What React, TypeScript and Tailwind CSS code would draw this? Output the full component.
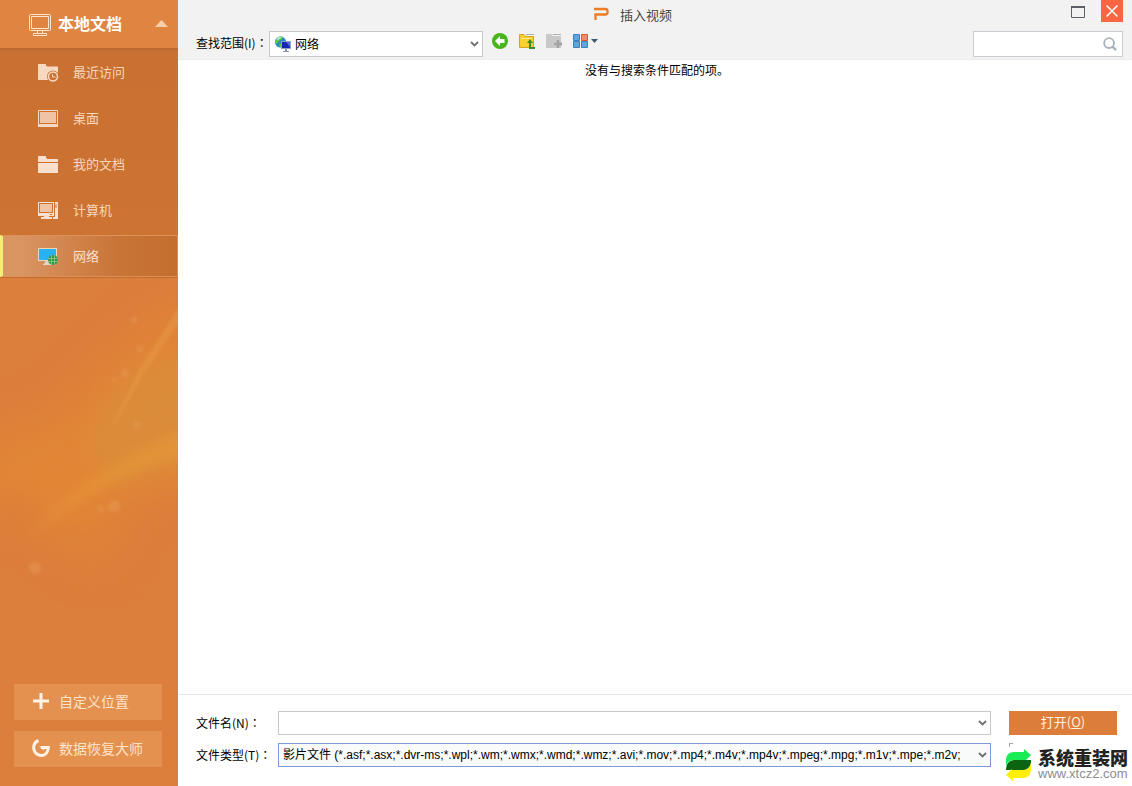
import React, { useState } from 'react';

const RecentIcon = () => (
  <svg width="22" height="22" viewBox="0 -2 22 22" aria-hidden="true">
    <path d="M0 1h8v2h12v14H0z" fill="#f7d9c2" />
    <path d="M9 3h11" stroke="#cb7132" />
    <circle cx="15" cy="13.500" r="6" fill="#cb7132" />
    <circle cx="15" cy="13.500" r="4.500" fill="none" stroke="#f7d9c2" strokeWidth="1.500" />
    <path d="M14.500 11v3h3" fill="none" stroke="#f7d9c2" />
  </svg>
);

const DesktopIcon = () => (
  <svg width="22" height="22" viewBox="0 -2 22 22" aria-hidden="true">
    <path d="M.500 1.500h19v16H.500z" fill="none" stroke="#f7d9c2" />
    <path d="M2 3h16v11H2z" fill="#efc3a3" />
    <path d="M0 15h20v3H0z" fill="#f7d9c2" />
  </svg>
);

const FolderIcon = () => (
  <svg width="22" height="22" viewBox="0 -2 22 22" aria-hidden="true">
    <path d="M0 1h8v2h12v4H0zM0 8h20v10H0z" fill="#f9dfcc" />
    <path d="M9 3.500h11" stroke="#cb7132" />
  </svg>
);

const ComputerIcon = () => (
  <svg width="22" height="22" viewBox="0 -2 22 22" aria-hidden="true">
    <path d="M.500 1.500h15v11H.500z" fill="none" stroke="#f9dfcc" />
    <path d="M2 3h12v8H2z" fill="#efc3a3" />
    <path d="M0 12h16v3H0zM17 1h3v16h-3zM6 15h5v1H6zM3 16h11v2H3zM15 16h5v2h-5z" fill="#f9dfcc" />
    <path d="M17 4h2M17 6h2M12 13.500h2" stroke="#cb7132" />
  </svg>
);

const NetworkIcon = () => (
  <svg width="22" height="22" viewBox="0 -2 22 22" aria-hidden="true">
    <path d="M0 1h19v13H0z" fill="#f1d5bb" />
    <path d="M1 2h17v11H1z" fill="#29b1f6" />
    <path d="M7 14h5v2h2v2H5v-1l2-1z" fill="#ded5cb" />
    <circle cx="15" cy="13" r="5" fill="#33964a" />
    <path d="M10 11.500h10M10 14.500h10M13.500 8v10M16.500 8v10" stroke="#9ad08d" strokeWidth=".7" />
  </svg>
);

const places = [
  { name: '最近访问', Icon: RecentIcon },
  { name: '桌面', Icon: DesktopIcon },
  { name: '我的文档', Icon: FolderIcon },
  { name: '计算机', Icon: ComputerIcon },
  { name: '网络', Icon: NetworkIcon },
];

const videoTypes =
  '影片文件 (*.asf;*.asx;*.dvr-ms;*.wpl;*.wm;*.wmx;*.wmd;*.wmz;*.avi;*.mov;*.mp4;*.m4v;*.mp4v;*.mpeg;*.mpg;*.m1v;*.mpe;*.m2v;';

const Colon = () => <span className="font-['Noto_Sans_CJK_TC',sans-serif]">：</span>;

const Chevron = () => (
  <svg
    className="pointer-events-none absolute top-1/2 right-1 -translate-y-1/2"
    width="9"
    height="7"
    viewBox="0 0 9 7"
    aria-hidden="true"
  >
    <path d="M1 1.500l3.500 3.500L8 1.500" fill="none" stroke="#6d6f73" strokeWidth="1.800" />
  </svg>
);

const SidebarArt = () => (
  <svg
    className="absolute inset-x-0 top-[278px] h-[330px] w-full"
    viewBox="0 0 178 330"
    preserveAspectRatio="none"
    aria-hidden="true"
  >
    <defs>
      <filter id="soft" x="-50%" y="-50%" width="200%" height="200%">
        <feGaussianBlur stdDeviation="26" />
      </filter>
      <filter id="mid" x="-50%" y="-50%" width="200%" height="200%">
        <feGaussianBlur stdDeviation="14" />
      </filter>
      <filter id="ray" x="-50%" y="-50%" width="200%" height="200%">
        <feGaussianBlur stdDeviation="6" />
      </filter>
      <filter id="thin" x="-50%" y="-50%" width="200%" height="200%">
        <feGaussianBlur stdDeviation="1.500" />
      </filter>
    </defs>
    <path d="M-30 170L60 140L150 50L230 20V200L120 210L100 290L50 240L-30 225z" fill="#e58b33" opacity=".65" filter="url(#soft)" />
    <path d="M95 130L150 80L230 80V170L120 210L90 180z" fill="#d3943f" opacity=".4" filter="url(#mid)" />
    <path d="M25 262Q80 195 210 140V172Q100 195 25 262z" fill="#e89a38" opacity=".6" filter="url(#ray)" />
    <path d="M112 147L140 90L185 20V36L145 94L115 147z" fill="#e89a45" opacity=".5" filter="url(#thin)" />
    <ellipse cx="14" cy="236" rx="14" ry="16" fill="#da7b3c" opacity=".7" filter="url(#mid)" />
    <g fill="#eba262" opacity=".35" filter="url(#thin)">
      <circle cx="114" cy="228" r="6" />
      <circle cx="101" cy="231" r="3" />
      <circle cx="35" cy="290" r="6" />
      <circle cx="137" cy="147" r="4" />
      <circle cx="125" cy="95" r="4" />
      <circle cx="134" cy="42" r="3" />
      <circle cx="140" cy="71" r="3" />
      <circle cx="114" cy="102" r="2" />
    </g>
  </svg>
);

const Sidebar = () => {
  const [active, setActive] = useState('网络');

  return (
    <aside className="relative flex w-[178px] shrink-0 flex-col bg-[#dc7e3c]">
      <SidebarArt />
      <button className="relative flex h-12 items-center bg-[#df8441] pr-[10px] pb-[2px] pl-[29px] text-white">
        <svg className="mt-1 shrink-0" width="22" height="24" viewBox="0 0 22 24" fill="none" stroke="#fde6cf" aria-hidden="true">
          <rect x=".500" y="1.500" width="21" height="16" rx="1" />
          <path d="M2.500 3.500h17v12h-17zM8.500 18v2.500M13.500 18v2.500M4.500 20.500h13v2h-13z" />
        </svg>
        <span className="ml-[7px] text-base font-bold">本地文档</span>
        <svg className="ml-auto" width="13" height="7" viewBox="0 0 13 7" aria-hidden="true">
          <path d="M6.500 0L13 7H0z" fill="#f9cfab" />
        </svg>
      </button>
      <nav className="relative flex flex-col gap-1 border-t-2 border-b border-t-[#bd682d] border-b-[#c36c30] bg-linear-to-b from-[#c97132] to-[#ce7433] pt-px">
        {places.map(({ name, Icon }) => (
          <button
            key={name}
            onClick={() => setActive(name)}
            className={
              active === name
                ? 'flex h-[42px] items-center border-y border-r border-l-[3px] border-y-[#dc9157] border-r-[#dc9157] border-l-[#f4ee78] bg-linear-to-r from-[#d99562] from-10% via-[#c97538] via-65% to-[#c46d2f] pl-[35px] text-[13px] text-[#fae0ca]'
                : 'flex h-[42px] items-center pl-[38px] text-[13px] text-[#f8d5b8]'
            }
          >
            <Icon />
            <span className="ml-[13px]">{name}</span>
          </button>
        ))}
      </nav>
      <div className="relative mt-auto flex flex-col gap-[11px] px-4 pb-[19px] pl-[14px] text-sm text-[#fde3c8]">
        <button className="flex h-9 items-center bg-[#e49150] pb-[2px] pl-[18px]">
          <svg width="18" height="18" viewBox="0 0 18 18" stroke="#fff3e5" strokeWidth="3" aria-hidden="true">
            <path d="M9 1v16M1 9h16" />
          </svg>
          <span className="ml-[9px]">自定义位置</span>
        </button>
        <button className="flex h-9 items-center bg-[#e49150] pb-[2px] pl-[18px]">
          <svg width="18" height="20" viewBox="0 -1 18 20" fill="none" stroke="#fff3e5" strokeWidth="3" aria-hidden="true">
            <path d="M6.500 1.500C1.500 3.500 .500 9 3 13C6 17.500 12 17.500 14.500 14Q16.300 11.500 16.300 8.500H9" />
            <path d="M7 7.500h5v4z" fill="#fff3e5" stroke="none" />
          </svg>
          <span className="ml-[9px]">数据恢复大师</span>
        </button>
      </div>
    </aside>
  );
};

const Toolbar = () => (
  <div className="flex h-[26px] items-center pr-[9px] pl-[18px]">
    <label htmlFor="look-in" className="w-[73px] pb-[2px] whitespace-nowrap">
      查找范围(I)
      <Colon />
    </label>
    <div className="relative h-full w-[214px]">
      <svg className="pointer-events-none absolute top-[5px] left-[5px]" width="18" height="17" viewBox="0 0 18 17" aria-hidden="true">
        <circle cx="6.500" cy="6" r="5.500" fill="#2588cf" />
        <path d="M3 2q3-3 6-1L7 4 5 5 3 8 1 6zM5 8l4-1v4l-3 0z" fill="#67c93a" />
        <path d="M2 3q3-3 6-2L4 4z" fill="#b7e6f5" />
        <path d="M7 5h10v8H7z" fill="#8fa3c8" />
        <path d="M8 6h8v6H8z" fill="#1527b5" />
        <path d="M12 6h4v5z" fill="#5069ea" />
        <path d="M11 13h2v2h2v1H9v-1h2z" fill="#8996aa" />
      </svg>
      <select id="look-in" className="h-full w-full appearance-none border border-[#c6c8cc] bg-white pr-5 pl-[25px]">
        <option>网络</option>
      </select>
      <Chevron />
    </div>
    <div className="ml-[9px] flex items-center gap-[11px] pb-[6px]">
      <button aria-label="后退">
        <svg width="16" height="16" viewBox="0 0 16 16" aria-hidden="true">
          <circle cx="8" cy="8" r="8" fill="#48b51d" />
          <path d="M3 8l5-5v3h4.500v4H8v3z" fill="#fff" />
        </svg>
      </button>
      <button aria-label="向上一级">
        <svg width="16" height="16" viewBox="0 0 16 16" aria-hidden="true">
          <path d="M.500 1.500H5l1.500 2h8v11H.500z" fill="#fbd02d" stroke="#d5a51e" />
          <path d="M7 1.500h8" stroke="#a9b1bb" />
          <path d="M2 5.500h11" stroke="#ffe78a" />
          <path d="M8 10l3-4 3 4h-2v4h4v2h-6v-6z" fill="#3c8d25" />
        </svg>
      </button>
      <button aria-label="新建文件夹" disabled>
        <svg width="16" height="16" viewBox="0 0 16 16" aria-hidden="true">
          <path d="M0 1h5l2 2h8v12H0z" fill="#c9c9c9" />
          <path d="M7 1.500h8" stroke="#b4b4b4" />
          <path d="M12 7v8M8 11h8" stroke="#dcdcdc" strokeWidth="4" />
          <path d="M12 7v8M8 11h8" stroke="#a3a3a3" strokeWidth="3" />
        </svg>
      </button>
      <button aria-label="视图">
        <svg width="26" height="16" viewBox="0 0 26 16" aria-hidden="true">
          <path d="M.500 1.500h6v6h-6zM.500 8.500h6v6h-6zM8.500 8.500h6v6h-6z" fill="#5ea6dc" stroke="#3d83bb" />
          <path d="M8.500 1.500h6v6h-6z" fill="#f58a70" stroke="#df563c" />
          <path d="M18 6h7l-3.500 4z" fill="#3f5974" />
        </svg>
      </button>
    </div>
    <div className="relative ml-auto h-full w-[150px]">
      <input aria-label="搜索" type="text" className="h-full w-full border border-[#c9cdd4] bg-white pr-6 pl-1 outline-none" />
      <svg
        className="pointer-events-none absolute top-[6px] right-[6px]"
        width="14"
        height="14"
        viewBox="0 0 15 15"
        fill="none"
        stroke="#a9b2bd"
        strokeWidth="2"
        aria-hidden="true"
      >
        <circle cx="6.500" cy="6.500" r="5.300" />
        <path d="M10 10l4 4" strokeWidth="2.500" />
      </svg>
    </div>
  </div>
);

const TitleBar = () => (
  <div className="flex h-[31px] items-start pr-[9px]">
    <h1 className="flex h-full flex-1 items-center justify-center gap-[11px] pb-[2px] pl-6 text-[13px] text-[#444]">
      <svg width="15" height="16" viewBox="0 0 15 16" aria-hidden="true">
        <path d="M0 2h11.500q2 0 2 2v1.500q0 2-2 2H1.500V13" fill="none" stroke="#f07b23" strokeWidth="2.300" />
      </svg>
      插入视频
    </h1>
    <button aria-label="最大化" className="flex h-[24px] w-7 items-center justify-center">
      <svg width="14" height="12" viewBox="0 0 14 12" aria-hidden="true">
        <path d="M.500 1h13v10.500H.500z" fill="none" stroke="#5c5f66" />
        <path d="M0 1h14" stroke="#5c5f66" strokeWidth="2" />
      </svg>
    </button>
    <button aria-label="关闭" className="ml-[9px] flex size-[22px] items-center justify-center bg-[#fa6542]">
      <svg width="12" height="12" viewBox="0 0 12 12" stroke="#fff" strokeWidth="1.500" aria-hidden="true">
        <path d="M.500.500l11 11M11.500.500l-11 11" />
      </svg>
    </button>
  </div>
);

const Watermark = () => (
  <div className="absolute right-1 bottom-[5px] flex items-center gap-[6px] bg-white">
    <svg width="27" height="32" viewBox="0 0 27 32" aria-hidden="true">
      <path d="M1 17V10Q2 3 9 3H19V0L26 6L20 12V11H9Q3 11 1 17z" fill="#1cec53" />
      <path d="M9 11H26V13Q25 21 20 21H1Q1 12 9 11z" fill="#0b6410" />
      <path d="M26 14V21Q25 29 18 29H8V32L1 26L7 20V21H18Q24 21 26 14z" fill="#ffee08" />
    </svg>
    <div className="flex flex-col font-['Liberation_Sans','Noto_Sans_CJK_SC',sans-serif]">
      <span className="text-lg/[18px] font-black text-[#222]">系统重装网</span>
      <span className="text-[13px]/[12px] text-[#8c8c8c]">www.xtcz2.com</span>
    </div>
  </div>
);

const Footer = () => (
  <footer className="relative flex h-[92px] border-t border-[#e5e6e8] pt-4 pr-[15px] pl-[18px]">
    <div className="flex min-w-0 flex-1 flex-col gap-2">
      <div className="flex h-6 items-center">
        <label htmlFor="file-name" className="w-[82px] shrink-0 whitespace-nowrap">
          文件名(N)
          <Colon />
        </label>
        <div className="relative h-full min-w-0 flex-1">
          <input id="file-name" type="text" className="h-full w-full border border-[#c6c8cc] bg-white pr-5 pl-1 outline-none" />
          <Chevron />
        </div>
      </div>
      <div className="flex h-6 items-center">
        <label htmlFor="file-type" className="w-[82px] shrink-0 whitespace-nowrap">
          文件类型(T)
          <Colon />
        </label>
        <div className="relative h-full min-w-0 flex-1">
          <select
            id="file-type"
            className="h-full w-full appearance-none border border-[#7a9bd6] bg-[#f9fafa] pr-5 pl-1 font-['Liberation_Sans','Noto_Sans_CJK_SC',sans-serif]"
          >
            <option>{videoTypes}</option>
          </select>
          <Chevron />
        </div>
      </div>
    </div>
    <div className="ml-[18px] flex w-[108px] flex-col gap-2">
      <button className="h-6 bg-[#dd7d3b] pb-[2px] text-[13px] text-[#fff0df]">
        打开(<u>O</u>)
      </button>
      <span className="size-1 border-t border-l border-[#aaa]" />
    </div>
    <Watermark />
  </footer>
);

const App: React.FC = () => {
  return (
    <div className="flex h-screen overflow-hidden bg-white font-['Noto_Sans_CJK_SC',sans-serif] text-xs text-black">
      <Sidebar />
      <main className="flex min-w-0 flex-1 flex-col">
        <header className="h-[60px] border-b border-[#ececec] bg-[#f2f2f2]">
          <TitleBar />
          <Toolbar />
        </header>
        <section className="flex-1 pt-[2px] pl-1 text-center">
          <p>没有与搜索条件匹配的项。</p>
        </section>
        <Footer />
      </main>
    </div>
  );
};

export default App;
